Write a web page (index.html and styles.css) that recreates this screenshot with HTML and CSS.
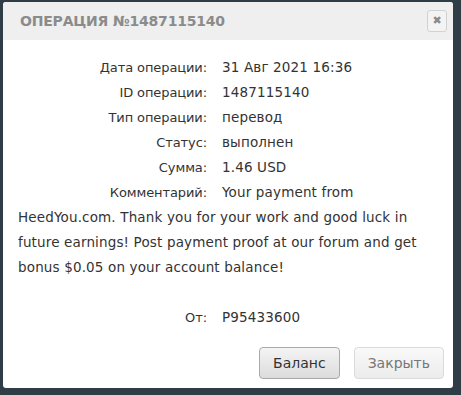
FILE: index.html
```html
<!DOCTYPE html>
<html lang="ru">
<head>
    <meta charset="UTF-8">
    <title>Операция</title>
    <link rel="stylesheet" href="styles.css">
</head>
<body>
    <div class="dialog">
        <div class="dialog-head">
            <span class="dialog-title">Операция №1487115140</span>
            <button class="close-btn">&#10006;</button>
        </div>
        <div class="dialog-body">
            <div class="row"><span class="label">Дата операции:</span><span class="value">31 Авг 2021 16:36</span></div>
            <div class="row"><span class="label">ID операции:</span><span class="value">1487115140</span></div>
            <div class="row"><span class="label">Тип операции:</span><span class="value">перевод</span></div>
            <div class="row"><span class="label">Статус:</span><span class="value">выполнен</span></div>
            <div class="row"><span class="label">Сумма:</span><span class="value">1.46 USD</span></div>
            <div class="row"><span class="label">Комментарий:</span><span class="value">Your payment from HeedYou.com. Thank you for your work and good luck in future earnings! Post payment proof at our forum and get bonus $0.05 on your account balance!</span></div>
            <div class="row spacer"></div>
            <div class="row"><span class="label">От:</span><span class="value">P95433600</span></div>
        </div>
        <div class="dialog-foot">
            <button class="button">Баланс</button>
            <button class="button light">Закрыть</button>
        </div>
    </div>
</body>
</html>
```

FILE: styles.css
```css
body {
    margin: 0;
    background-color: #2e3d46;
    font-family: "DejaVu Sans", sans-serif;
    color: #333;
}

.dialog {
    margin: 2px 8px 0 3px;
    width: 450px;
    height: 386px;
    background: #fff;
    border-radius: 3px;
    display: flex;
    flex-direction: column;
}

.dialog-head {
    background: #efefef;
    height: 38px;
    border-radius: 3px 3px 0 0;
    display: flex;
    align-items: center;
    justify-content: space-between;
    padding: 0 6px 0 17px;
}

.dialog-title {
    font-size: 14px;
    font-weight: bold;
    text-transform: uppercase;
    color: #8b8b8b;
    letter-spacing: -0.2px;
}

.close-btn {
    width: 20px;
    height: 22px;
    padding: 0;
    border: 1px solid #d2d2d2;
    border-radius: 3px;
    background: #f3f3f3;
    color: #8a8a8a;
    font-size: 11px;
    font-weight: bold;
    line-height: 20px;
    font-family: "DejaVu Sans", sans-serif;
}

.dialog-body {
    padding: 15px 15px 0 15px;
    font-size: 13.5px;
    line-height: 25px;
    flex: 1;
}

.label {
    display: inline-block;
    width: 189px;
    padding-right: 15px;
    text-align: right;
    font-size: 13px;
    letter-spacing: -0.1px;
    white-space: nowrap;
}

.value {
    letter-spacing: 0.15px;
}

.spacer {
    height: 25px;
}

.dialog-foot {
    display: flex;
    justify-content: flex-end;
    gap: 14px;
    padding: 0 9px 9px 0;
}

.button {
    font-family: "DejaVu Sans", sans-serif;
    font-size: 14px;
    color: #333;
    height: 32px;
    padding: 0 13px;
    border: 1px solid #a9a9a9;
    border-radius: 4px;
    background: linear-gradient(#f4f4f4, #dcdcdc);
}

.button.light {
    color: #777;
    border-color: #dadada;
    background: linear-gradient(#f9f9f9, #ececec);
}
```
